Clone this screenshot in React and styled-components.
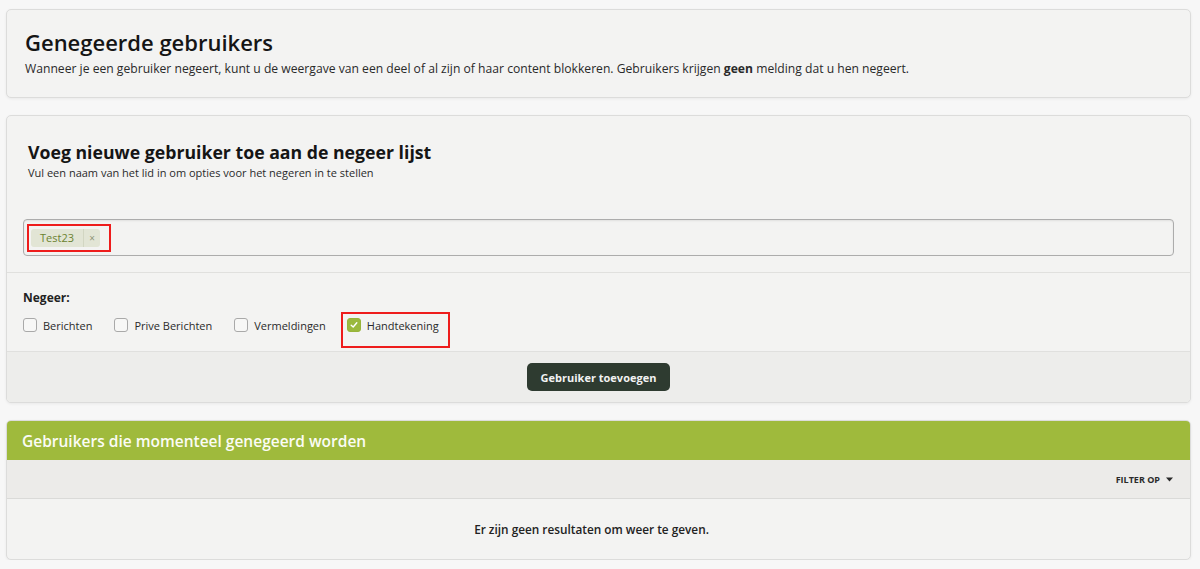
import React from 'react'
import styled, { createGlobalStyle } from 'styled-components'

const GlobalStyle = createGlobalStyle`
  body {
    margin: 0;
    background: #f7f7f7;
    font-family: "Open Sans", "Noto Sans", sans-serif;
    color: #1d1d1d;
  }
`

const Page = styled.div`
  padding: 9px 9px 0 6px;
  display: flex;
  flex-direction: column;
  gap: 17px;
`

const Card = styled.div`
  background: #f3f3f2;
  border: 1px solid #dcdcdb;
  border-radius: 5px;
  box-shadow: 0 1px 3px rgba(0, 0, 0, 0.06);
  overflow: hidden;
`

const Intro = styled.div`
  padding: 17px 18px 20px;
`

const PageTitle = styled.h1`
  margin: 0;
  font-size: 22px;
  font-weight: 600;
  line-height: 30px;
  color: #151515;
`

const PageText = styled.p`
  margin: 3px 0 0;
  font-size: 12.15px;
  line-height: 17px;
  color: #2a2a2a;
`

const FormTop = styled.div`
  padding: 24px 16px 16px;
  border-bottom: 1px solid #e0e0de;
`

const FormTitle = styled.h2`
  margin: 0 0 0 5px;
  font-size: 17.7px;
  font-weight: 700;
  line-height: 24px;
  color: #151515;
`

const FormText = styled.p`
  margin: 1px 0 0 5px;
  font-size: 11px;
  line-height: 15px;
  color: #2a2a2a;
`

const TagInput = styled.div`
  margin-top: 39px;
  height: 37px;
  box-sizing: border-box;
  border: 1px solid #acacac;
  border-radius: 4px;
  box-shadow: inset 0 1px 2px rgba(0, 0, 0, 0.08);
  display: flex;
  align-items: center;
  padding-left: 3px;
`

const Highlight = styled.div`
  border: 2px solid #ee1c1c;
  padding: ${p => p.$pad || '3px'};
  display: inline-flex;
  align-items: ${p => p.$align || 'center'};
`

const Tag = styled.span`
  display: inline-flex;
  align-items: stretch;
  height: 18px;
  background: #e2e5d5;
  border-radius: 3px;
  font-size: 11px;
  color: #6b8230;
`

const TagLabel = styled.span`
  padding: 0 9px;
  display: flex;
  align-items: center;
  border-right: 1px solid #d2d6c2;
`

const TagRemove = styled.span`
  width: 16px;
  display: flex;
  align-items: center;
  justify-content: center;
  font-size: 10px;
  color: #8f9578;
`

const Options = styled.div`
  padding: 17px 16px 0;
  height: 78px;
  box-sizing: border-box;
`

const OptionsLabel = styled.div`
  font-size: 12px;
  font-weight: 700;
  color: #222;
  line-height: 16px;
`

const CheckRow = styled.div`
  display: flex;
  align-items: flex-start;
  gap: 22px;
  margin-top: 11px;
`

const Check = styled.label`
  display: inline-flex;
  align-items: center;
  gap: 6px;
  font-size: 11px;
  color: #2a2a2a;
  height: 16px;
`

const Box = styled.span`
  width: 12px;
  height: 12px;
  border-radius: 3px;
  border: 1px solid ${p => (p.$on ? '#97b43a' : '#a9a9a9')};
  background: ${p => (p.$on ? '#9ab93e' : '#f7f7f6')};
  display: flex;
  align-items: center;
  justify-content: center;
`

const Footer = styled.div`
  background: #ededeb;
  border-top: 1px solid #e0e0de;
  display: flex;
  justify-content: center;
  padding: 11px 0 11px;
`

const Button = styled.button`
  height: 28px;
  padding: 0 14px;
  border: none;
  border-radius: 5px;
  background: #2e3b30;
  color: #f2f2f2;
  font-family: inherit;
  font-size: 11px;
  font-weight: 700;
`

const ListHeader = styled.div`
  background: #9fba3c;
  color: #fbfcf5;
  height: 39px;
  display: flex;
  align-items: center;
  padding-left: 15px;
  font-size: 15.5px;
  font-weight: 600;
`

const FilterBar = styled.div`
  background: #ecebe9;
  height: 38px;
  border-bottom: 1px solid #dadad8;
  display: flex;
  align-items: center;
  justify-content: flex-end;
  padding-right: 17px;
  font-size: 9px;
  font-weight: 700;
  color: #2a2a2a;
  gap: 6px;
`

const Empty = styled.div`
  height: 60px;
  display: flex;
  align-items: center;
  justify-content: center;
  padding-right: 14px;
  font-size: 11.8px;
  font-weight: 600;
  color: #222;
`

const Tick = () => (
  <svg width="8" height="8" viewBox="0 0 8 8">
    <path d="M1.2 4.2 L3.2 6 L6.8 1.8" fill="none" stroke="#fff" strokeWidth="1.4" strokeLinecap="round" strokeLinejoin="round" />
  </svg>
)

const Caret = () => (
  <svg width="7" height="5" viewBox="0 0 7 5">
    <path d="M0 0.5 H7 L3.5 4.5 Z" fill="#2a2a2a" />
  </svg>
)

const options = [
  { label: 'Berichten', on: false },
  { label: 'Prive Berichten', on: false },
  { label: 'Vermeldingen', on: false },
  { label: 'Handtekening', on: true }
]

const App = () => (
  <>
    <GlobalStyle />
    <Page>
      <Card>
        <Intro>
          <PageTitle>Genegeerde gebruikers</PageTitle>
          <PageText>
            Wanneer je een gebruiker negeert, kunt u de weergave van een deel of al zijn of haar content blokkeren. Gebruikers krijgen <b>geen</b> melding dat u hen negeert.
          </PageText>
        </Intro>
      </Card>

      <Card>
        <FormTop>
          <FormTitle>Voeg nieuwe gebruiker toe aan de negeer lijst</FormTitle>
          <FormText>Vul een naam van het lid in om opties voor het negeren in te stellen</FormText>
          <TagInput>
            <Highlight $pad="3px 9px 3px 2px">
              <Tag>
                <TagLabel>Test23</TagLabel>
                <TagRemove>×</TagRemove>
              </Tag>
            </Highlight>
          </TagInput>
        </FormTop>
        <Options>
          <OptionsLabel>Negeer:</OptionsLabel>
          <CheckRow>
            {options.map((o, i) =>
              o.on ? (
                <Highlight key={i} $pad="3px 9px 13px 4px" $align="flex-start" style={{ marginTop: -5, marginLeft: -7 }}>
                  <Check>
                    <Box $on>
                      <Tick />
                    </Box>
                    {o.label}
                  </Check>
                </Highlight>
              ) : (
                <Check key={i}>
                  <Box />
                  {o.label}
                </Check>
              )
            )}
          </CheckRow>
        </Options>
        <Footer>
          <Button>Gebruiker toevoegen</Button>
        </Footer>
      </Card>

      <Card>
        <ListHeader>Gebruikers die momenteel genegeerd worden</ListHeader>
        <FilterBar>
          FILTER OP <Caret />
        </FilterBar>
        <Empty>Er zijn geen resultaten om weer te geven.</Empty>
      </Card>
    </Page>
  </>
)

export default App
